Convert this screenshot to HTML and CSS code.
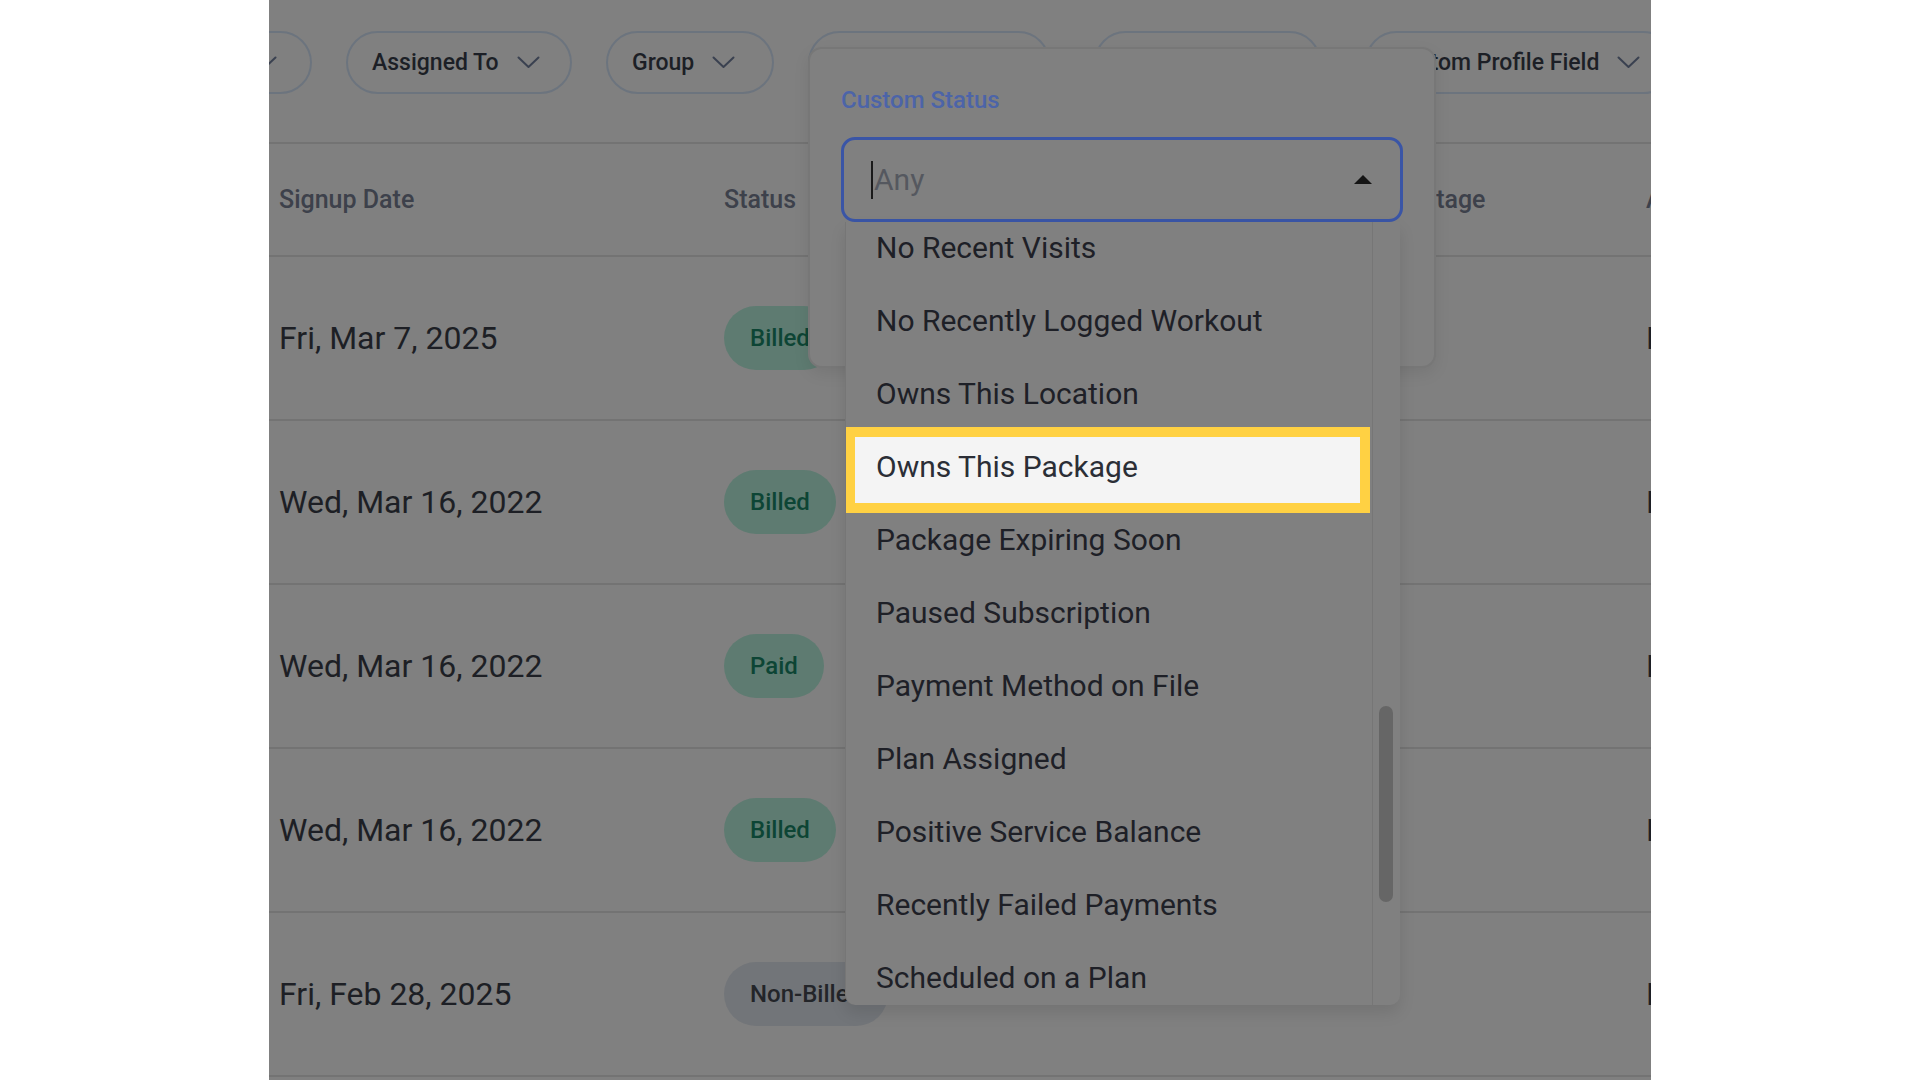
FILE: index.html
```html
<!DOCTYPE html>
<html lang="en">
<head>
<meta charset="utf-8">
<title>Members – Custom Status filter</title>
<link rel="stylesheet" href="styles.css">
</head>
<body>
<div class="frame">
  <div class="filters">
    <div class="pill pill-cut"><span>Location</span><svg class="chev" viewBox="0 0 23 13"><polyline points="1.5,1.5 11.5,11 21.5,1.5"/></svg></div>
    <div class="pill w-assigned"><span>Assigned To</span><svg class="chev" viewBox="0 0 23 13"><polyline points="1.5,1.5 11.5,11 21.5,1.5"/></svg></div>
    <div class="pill w-group"><span>Group</span><svg class="chev" viewBox="0 0 23 13"><polyline points="1.5,1.5 11.5,11 21.5,1.5"/></svg></div>
    <div class="pill w-status"><span>Custom Status</span><svg class="chev" viewBox="0 0 23 13"><polyline points="1.5,1.5 11.5,11 21.5,1.5"/></svg></div>
    <div class="pill w-tags pill-far"><span>Tags</span><svg class="chev" viewBox="0 0 23 13"><polyline points="1.5,1.5 11.5,11 21.5,1.5"/></svg></div>
    <div class="pill pill-far"><span>Custom Profile Field</span><svg class="chev" viewBox="0 0 23 13"><polyline points="1.5,1.5 11.5,11 21.5,1.5"/></svg></div>
  </div>

  <div class="table">
    <div class="thead">
      <div>Signup Date</div>
      <div>Status</div>
      <div>Stage</div>
      <div>Assigned Staff</div>
    </div>
    <div class="trow">
      <div>Fri, Mar 7, 2025</div>
      <div><span class="badge">Billed</span></div>
      <div></div>
      <div>Lena Park</div>
    </div>
    <div class="trow">
      <div>Wed, Mar 16, 2022</div>
      <div><span class="badge">Billed</span></div>
      <div></div>
      <div>Lena Park</div>
    </div>
    <div class="trow">
      <div>Wed, Mar 16, 2022</div>
      <div><span class="badge">Paid</span></div>
      <div></div>
      <div>Lena Park</div>
    </div>
    <div class="trow">
      <div>Wed, Mar 16, 2022</div>
      <div><span class="badge">Billed</span></div>
      <div></div>
      <div>Lena Park</div>
    </div>
    <div class="trow">
      <div>Fri, Feb 28, 2025</div>
      <div><span class="badge badge-muted">Non-Billed</span></div>
      <div></div>
      <div>Lena Park</div>
    </div>
  </div>

  <div class="popover">
    <div class="label">Custom Status</div>
    <div class="input">
      <span class="cursor"></span><span class="placeholder">Any</span>
      <span class="caret"></span>
    </div>
    <div class="listbox">
      <div class="options">
        <div class="option first">No Recent Visits</div>
        <div class="option">No Recently Logged Workout</div>
        <div class="option">Owns This Location</div>
        <div class="option option-hl">Owns This Package</div>
        <div class="option">Package Expiring Soon</div>
        <div class="option">Paused Subscription</div>
        <div class="option">Payment Method on File</div>
        <div class="option">Plan Assigned</div>
        <div class="option">Positive Service Balance</div>
        <div class="option">Recently Failed Payments</div>
        <div class="option">Scheduled on a Plan</div>
      </div>
      <div class="gutter"><div class="thumb"></div></div>
    </div>
  </div>
</div>
</body>
</html>
```

FILE: styles.css
```css
* { box-sizing: border-box; }

body {
  margin: 0;
  background: #ffffff;
  font-family: Roboto, "Noto Sans", "Liberation Sans", sans-serif;
}

.frame {
  position: relative;
  margin-left: 269px;
  width: 1382px;
  height: 1080px;
  overflow: hidden;
  background: #808080;
}

/* ---------- filter pills ---------- */
.filters {
  display: flex;
  align-items: flex-start;
  gap: 34px;
  height: 144px;
  padding-top: 31px;
  border-bottom: 2px solid #737373;
}

.pill {
  flex: none;
  display: flex;
  align-items: center;
  gap: 18px;
  height: 63px;
  padding: 0 33px 0 24px;
  border: 2px solid #6c747e;
  border-radius: 32px;
  font-size: 23px;
  font-weight: 500;
  color: #1c1f26;
  white-space: nowrap;
}

.pill-cut {
  width: 180px;
  margin-left: -137px;
  justify-content: flex-end;
}

.w-assigned { width: 226px; }
.w-group { width: 168px; }
.w-status { width: 242px; }
.w-tags { width: 227px; }
.pill-far { margin-left: 10px; }

.chev {
  flex: none;
  width: 23px;
  height: 13px;
  fill: none;
  stroke: #3a4150;
  stroke-width: 2;
  stroke-linecap: round;
  stroke-linejoin: round;
}

/* ---------- table ---------- */
.thead,
.trow {
  display: grid;
  grid-template-columns: 445px 697px 225px 300px;
  align-items: center;
  padding-left: 10px;
  border-bottom: 2px solid #737373;
  white-space: nowrap;
}

.thead {
  height: 113px;
  font-size: 25px;
  font-weight: 500;
  color: #3d414b;
}

.trow {
  height: 164px;
  font-size: 32px;
  color: #1d1f25;
}

.badge {
  display: inline-flex;
  align-items: center;
  height: 64px;
  padding: 0 26px;
  border-radius: 32px;
  background: #5e7b71;
  color: #0d4535;
  font-size: 24px;
  font-weight: 500;
}

.badge-muted {
  background: #727579;
  color: #232529;
}

/* ---------- popover ---------- */
.popover {
  position: absolute;
  left: 539px;
  top: 47px;
  width: 628px;
  height: 321px;
  padding: 37px 31px 0 31px;
  background: #808080;
  border: 2px solid #777777;
  border-radius: 14px;
  box-shadow: 0 6px 16px rgba(0, 0, 0, 0.08);
  z-index: 2;
}

.label {
  font-size: 24px;
  line-height: 28px;
  font-weight: 500;
  color: #4c64a8;
  margin-bottom: 23px;
}

.input {
  display: flex;
  align-items: center;
  height: 85px;
  padding: 0 28px 0 27px;
  border: 3px solid #3a55a6;
  border-radius: 14px;
}

.cursor {
  width: 2px;
  height: 38px;
  background: #1a1a1a;
}

.placeholder {
  margin-left: 1px;
  font-size: 30px;
  color: #55585f;
}

.caret {
  margin-left: auto;
  width: 0;
  height: 0;
  border-left: 9px solid transparent;
  border-right: 9px solid transparent;
  border-bottom: 9px solid #151515;
}

.listbox {
  position: absolute;
  left: 35px;
  top: 173px;
  width: 555px;
  height: 783px;
  display: flex;
  background: #808080;
  border-left: 1px solid #767676;
  border-radius: 0 0 10px 10px;
  box-shadow: 0 8px 16px rgba(0, 0, 0, 0.1);
  overflow: hidden;
  z-index: 3;
}

.options {
  flex: 1;
  overflow: hidden;
}

.option {
  position: relative;
  display: flex;
  align-items: center;
  height: 73px;
  padding-left: 30px;
  font-size: 30px;
  color: #1e2027;
  white-space: nowrap;
}

.option.first { margin-top: -11px; }

.option-hl {
  z-index: 1;
  color: #2b2e36;
}

.option-hl::before {
  content: "";
  position: absolute;
  top: -3px;
  bottom: -10px;
  left: -1px;
  right: 2px;
  border: 10px solid #ffd143;
  background: #f4f4f4;
  z-index: -1;
}

.gutter {
  flex: none;
  width: 28px;
  padding-left: 6px;
  border-left: 1px solid #767676;
}

.thumb {
  width: 14px;
  height: 196px;
  margin-top: 484px;
  border-radius: 7px;
  background: #666666;
}
```
